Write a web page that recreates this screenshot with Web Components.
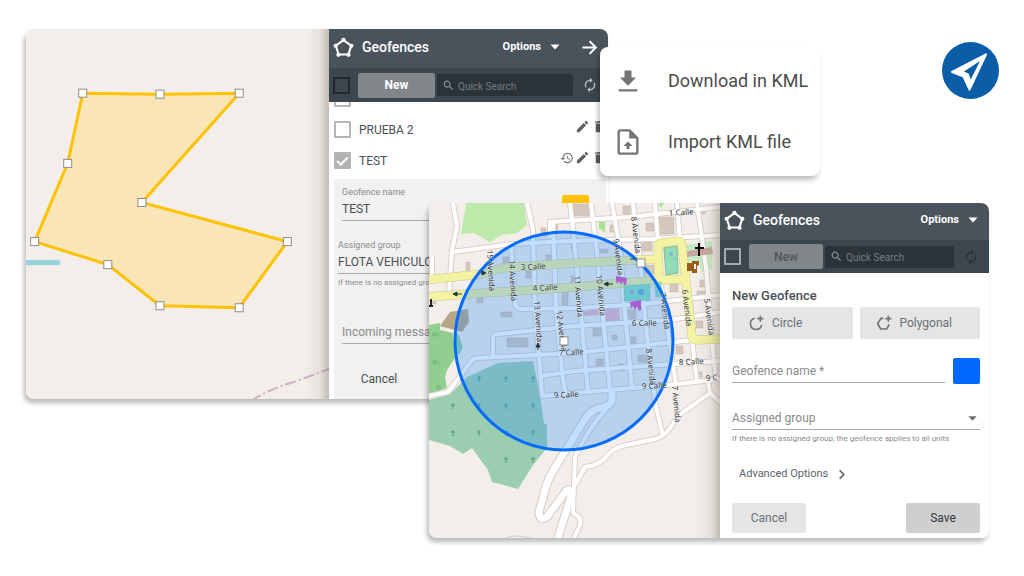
<!DOCTYPE html>
<html lang="en">
<head>
<meta charset="utf-8">
<meta name="viewport" content="width=device-width, initial-scale=1">
<title>Geofences</title>
<style>
  body{ margin:0; background:#fff; color:#4a4f54; font-family:Roboto,"Open Sans",sans-serif; font-size:12px; }
</style>
</head>
<body>
<geo-stage></geo-stage>

<script>
const html = String.raw;

// Base: clona la plantilla estática de cada clase en su shadow root
class BaseElement extends HTMLElement {
  constructor(){
    super();
    this.attachShadow({ mode: 'open' });
    const tpl = document.createElement('template');
    tpl.innerHTML = this.template();
    this.shadowRoot.appendChild(tpl.content.cloneNode(true));
  }
  template(){ return ''; }
}

/**
 * <geo-icon name size>
 * Los trazos usan currentColor
 */
const ICONS = {
  pentagon: '<path d="M12 3.5 20.8 10 17.6 20H6.4L3.2 10z" fill="none" stroke="currentColor" stroke-width="2.4"/><g fill="currentColor"><circle cx="12" cy="3.2" r="2.4"/><circle cx="21" cy="10" r="2.4"/><circle cx="17.8" cy="20.4" r="2.4"/><circle cx="6.2" cy="20.4" r="2.4"/><circle cx="3" cy="10" r="2.4"/></g>',
  caret: '<path d="M3 7h18l-9 10z" fill="currentColor"/>',
  arrow: '<path d="M2 12h18M12 3l9 9-9 9" fill="none" stroke="currentColor" stroke-width="2.8"/>',
  search: '<path fill="currentColor" d="M15.5 14h-.8l-.3-.3A6.5 6.5 0 1 0 13.700 14.400l.3.3v.8l5 5 1.500-1.500zm-6 0a4.500 4.500 0 1 1 0-9 4.500 4.500 0 0 1 0 9z"/>',
  refresh: '<path fill="currentColor" d="M12 6v3l4-4-4-4v3a8 8 0 0 0-6.800 12.300l1.500-1.500A6 6 0 0 1 12 6zm6.800 1.700-1.500 1.500A6 6 0 0 1 12 18v-3l-4 4 4 4v-3a8 8 0 0 0 6.800-12.300z"/>',
  edit: '<path fill="currentColor" d="M3 17.200V21h3.800L17.800 9.900 14.100 6.200zM20.700 7c.4-.4.4-1 0-1.400l-2.300-2.300a1 1 0 0 0-1.400 0l-1.800 1.800 3.700 3.700z"/>',
  trash: '<path fill="currentColor" d="M6 19c0 1.100.9 2 2 2h8a2 2 0 0 0 2-2V7H6zM19 4h-3.500l-1-1h-5l-1 1H5v2h14z"/>',
  history: '<path fill="currentColor" d="M13 3a9 9 0 0 0-9 9H1l4 4 4-4H6a7 7 0 1 1 2 4.900l-1.400 1.500A9 9 0 1 0 13 3zm-1 5v5l4.300 2.500.7-1.200-3.500-2.100V8z"/>',
  download: '<path fill="currentColor" d="M19 9h-4V3H9v6H5l7 7zM4 19v2h16v-2z"/>',
  upload: '<path d="M13.500 2H5.500A1.500 1.500 0 0 0 4 3.500v17A1.500 1.500 0 0 0 5.500 22h13a1.500 1.500 0 0 0 1.500-1.500V8.500z" fill="none" stroke="currentColor" stroke-width="2"/><path fill="currentColor" d="M13 2V9h7zM12 11.500l4 4h-2.700V18h-2.600v-2.500H8z"/>',
  circle: '<path d="M10 5a8.500 8.500 0 1 0 10.500 10M18.500 1v9M14 5.500h9" fill="none" stroke="currentColor" stroke-width="2.400"/>',
  polygon: '<path d="M11 5H7.500L2.500 13l4.500 8h9l4-7M18.500 1v9M14 5.500h9" fill="none" stroke="currentColor" stroke-width="2.400"/>',
  chevron: '<path d="M8 3l9 9-9 9" fill="none" stroke="currentColor" stroke-width="3.500"/>'
};

class GeoIcon extends BaseElement {
  template(){
    const size = this.getAttribute('size') || 16;
    return html`
      <style>
        :host{ display:inline-flex; flex:none; }
        svg{ display:block; }
      </style>
      <svg width="${size}" height="${size}" viewBox="0 0 24 24" aria-hidden="true">${ICONS[this.getAttribute('name')] || ''}</svg>`;
  }
}

/**
 * <geo-check label checked>
 * Casilla cuadrada; --line cambia el borde
 */
class GeoCheck extends BaseElement {
  template(){
    return html`
      <style>
        :host{ display:flex; }
        label{ display:flex; align-items:center; gap:8px; }
        input{ appearance:none; box-sizing:border-box; width:17px; height:17px; margin:0; border:2px solid var(--line,#b5b5b5); border-radius:1px; background:transparent; display:grid; place-items:center; }
        input:checked{ background:#b2b2b2; }
        input:checked::after{ content:""; width:9px; height:4px; border:solid #fff; border-width:0 0 2px 2px; transform:translateY(-1px) rotate(-45deg); }
      </style>
      <label><input type="checkbox" ${this.hasAttribute('checked') ? 'checked' : ''} ${this.textContent ? '' : 'aria-label="Select all"'}><slot></slot></label>`;
  }
}

/**
 * <geo-header arrow>
 * Barra superior: título y menú de opciones
 */
class GeoHeader extends BaseElement {
  template(){
    return html`
      <style>
        :host{ display:flex; align-items:center; box-sizing:border-box; height:var(--head-h); padding:0 10px 3px 4px; background:#4a535b; color:#fff; }
        h2{ margin:0 auto 0 8px; font-size:14px; line-height:16px; font-weight:500; }
        button{ display:flex; align-items:center; gap:8px; padding:0; border:0; background:none; color:inherit; font:700 11px/16px Roboto,sans-serif; }
        .go{ margin-left:20px; }
      </style>
      <geo-icon name="pentagon" size="21"></geo-icon>
      <h2><slot></slot></h2>
      <button type="button">Options <geo-icon name="caret" size="12"></geo-icon></button>
      ${this.hasAttribute('arrow') ? '<button class="go" type="button" aria-label="Hide"><geo-icon name="arrow" size="17"></geo-icon></button>' : ''}`;
  }
}

/**
 * <geo-toolbar idle>
 * - idle: sin acciones disponibles mientras se crea una geocerca
 */
class GeoToolbar extends BaseElement {
  template(){
    return html`
      <style>
        :host{ --line:#20272d; display:flex; align-items:center; box-sizing:border-box; height:var(--bar-h); padding:0 10px 0 4px; background:#3c464e; color:#b9bec2; }
        :host([idle]){ --line:#a5aaae; color:#262e34; }
        button{ padding:0; border:0; background:none; color:inherit; }
        .new{ flex:none; width:var(--new-w); height:25px; margin:0 2px 0 8px; border-radius:2px; background:#80868a; color:#fff; font:700 12px/16px Roboto,sans-serif; }
        :host([idle]) .new{ color:#50575c; font-weight:500; }
        .search{ flex:1; min-width:0; display:flex; align-items:center; gap:3px; height:22px; padding-left:5px; border-radius:2px; background:#2b3339; color:#8d9397; }
        input{ flex:1; min-width:0; padding:3px 0 0; border:0; outline:0; background:none; color:#fff; font:10px/16px Roboto,sans-serif; }
        input::placeholder{ color:#747b80; opacity:1; }
        .reload{ display:flex; margin-left:9px; }
      </style>
      <geo-check></geo-check>
      <button class="new" type="button">New</button>
      <label class="search"><geo-icon name="search" size="13"></geo-icon><input type="search" placeholder="Quick Search" aria-label="Quick Search"></label>
      <button class="reload" type="button" aria-label="Refresh"><geo-icon name="refresh" size="16"></geo-icon></button>`;
  }
}

/**
 * <geo-field label value hint floating select>
 * - floating: la etiqueta queda arriba y el valor debajo
 */
class GeoField extends BaseElement {
  template(){
    const label = this.getAttribute('label');
    const value = this.getAttribute('value') || '';
    const hint = this.getAttribute('hint');
    const floating = this.hasAttribute('floating');
    const name = floating ? '' : `aria-label="${label}"`;
    const control = this.hasAttribute('select')
      ? `<select id="control" ${name}><option>${value || label}</option></select><geo-icon name="caret" size="11"></geo-icon>`
      : `<input id="control" type="text" value="${value}" placeholder="${floating ? '' : label}" ${name}>`;
    return html`
      <style>
        :host{ display:block; flex:1; min-width:0; color:#4a4f54; }
        label{ display:block; font-size:9px; line-height:12px; color:#8a8a8a; }
        .box{ display:flex; align-items:center; height:22px; border-bottom:1px solid #a8a8a8; padding-right:2px; }
        input, select{ appearance:none; flex:1; min-width:0; padding:0; border:0; outline:0; background:none; color:inherit; font:12px/16px Roboto,sans-serif; }
        input::placeholder{ color:#8a8a8a; opacity:1; }
        :host([select]:not([value])) select{ color:#8a8a8a; }
        geo-icon{ color:#6a6a6a; }
        small{ display:block; margin-top:4px; font-size:8px; line-height:10px; color:#8a8a8a; white-space:nowrap; }
      </style>
      ${floating ? `<label for="control">${label}</label>` : ''}
      <div class="box">${control}</div>
      ${hint ? `<small>${hint}</small>` : ''}`;
  }
}

/**
 * <geo-button icon kind>
 * kind: flat | soft (default) | strong
 */
class GeoButton extends BaseElement {
  template(){
    const icon = this.getAttribute('icon');
    return html`
      <style>
        :host{ display:flex; }
        button{ flex:1; display:flex; align-items:center; justify-content:center; gap:8px; height:30px; min-width:74px; padding:0 16px; border:0; border-radius:2px; background:#e5e5e5; color:#6a7076; font:12px/16px Roboto,sans-serif; }
        :host([icon]) button{ justify-content:flex-start; height:32px; }
        :host([kind="flat"]) button{ background:none; color:#4a4f54; }
        :host([kind="strong"]) button{ background:#cfcfcf; color:#33383c; }
      </style>
      <button type="button">${icon ? `<geo-icon name="${icon}" size="16"></geo-icon>` : ''}<slot></slot></button>`;
  }
}

class GeoSwatch extends BaseElement {
  template(){
    return html`
      <style>
        :host{ display:block; flex:none; }
        button{ display:block; width:27px; height:26px; padding:0; border:0; border-radius:2px; background:var(--swatch); }
      </style>
      <button type="button" aria-label="Color"></button>`;
  }
}

/**
 * <geo-row checked history>
 * Una geocerca de la lista con sus acciones
 */
class GeoRow extends BaseElement {
  template(){
    return html`
      <style>
        :host{ display:flex; align-items:center; flex:none; height:31px; padding:0 1px 0 5px; }
        geo-check{ margin-right:auto; }
        button{ display:flex; margin-bottom:6px; padding:0; border:0; background:none; color:#5d5d5d; }
        .edit{ margin-right:2px; }
        .past{ margin-right:1px; color:#777; }
      </style>
      <geo-check ${this.hasAttribute('checked') ? 'checked' : ''}>${this.getAttribute('label')}</geo-check>
      ${this.hasAttribute('history') ? '<button class="past" type="button" aria-label="History"><geo-icon name="history" size="14"></geo-icon></button>' : ''}
      <button class="edit" type="button" aria-label="Edit"><geo-icon name="edit" size="15"></geo-icon></button>
      <button class="bin" type="button" aria-label="Delete"><geo-icon name="trash" size="15"></geo-icon></button>`;
  }
}

// Panel con la lista y la geocerca abierta
class ListPanel extends BaseElement {
  template(){
    return html`
      <style>
        :host{ --head-h:39px; --bar-h:34px; --new-w:77px; display:block; width:279px; background:#fff; }
        .list{ display:flex; flex-direction:column; justify-content:flex-end; height:74px; overflow:hidden; }
        .detail{ margin:3px 2px 0 5px; padding:7px 0 5px 4px; background:#f1f1f1; }
        .inset{ display:flex; align-items:flex-end; gap:8px; padding:0 17px 0 4px; }
        .group{ margin:18px 13px 33px 0; }
        geo-button{ width:74px; margin:20px 0 0 4px; }
      </style>
      <geo-header arrow>Geofences</geo-header>
      <geo-toolbar></geo-toolbar>
      <div class="list">
        <geo-row label=" "></geo-row>
        <geo-row label="PRUEBA 2"></geo-row>
        <geo-row label="TEST" checked history></geo-row>
      </div>
      <div class="detail">
        <div class="inset"><geo-field floating label="Geofence name" value="TEST"></geo-field><geo-swatch style="--swatch:#fcc203"></geo-swatch></div>
        <geo-field class="group" floating select label="Assigned group" value="FLOTA VEHICULOS" hint="If there is no assigned group, the geofence applies to all units"></geo-field>
        <div class="inset"><geo-field label="Incoming message"></geo-field></div>
        <geo-button kind="flat">Cancel</geo-button>
      </div>`;
  }
}

// Panel con el formulario de alta
class FormPanel extends BaseElement {
  template(){
    return html`
      <style>
        :host{ --head-h:37px; --bar-h:33px; --new-w:74px; display:block; width:269px; background:#fff; }
        form{ padding:15px 9px 5px 12px; }
        h3{ margin:0 0 3px; font-size:13px; line-height:16px; font-weight:500; }
        .shapes{ display:grid; grid-template-columns:1fr 1fr; gap:7px; }
        .name{ display:flex; align-items:center; gap:8px; margin:19px 0 23px; }
        .more{ display:flex; align-items:center; gap:8px; margin:22px 0 21px 7px; padding:0; border:0; background:none; color:#5c646b; font:11px/16px Roboto,sans-serif; }
        .actions{ display:flex; justify-content:space-between; }
      </style>
      <geo-header>Geofences</geo-header>
      <geo-toolbar idle></geo-toolbar>
      <form>
        <h3>New Geofence</h3>
        <div class="shapes">
          <geo-button icon="circle">Circle</geo-button>
          <geo-button icon="polygon">Polygonal</geo-button>
        </div>
        <div class="name"><geo-field label="Geofence name *"></geo-field><geo-swatch style="--swatch:#0069ff"></geo-swatch></div>
        <geo-field select label="Assigned group" hint="If there is no assigned group, the geofence applies to all units"></geo-field>
        <button class="more" type="button">Advanced Options <geo-icon name="chevron" size="11"></geo-icon></button>
        <div class="actions">
          <geo-button>Cancel</geo-button>
          <geo-button kind="strong">Save</geo-button>
        </div>
      </form>`;
  }
}

const handle = (x, y) => `<rect x="${x - 4}" y="${y - 4}" width="8" height="8" fill="#fff" stroke="#8d8d8d"/>`;

const MAP_CSS = `
  :host{ display:block; flex:1; min-width:0; background:#f3eeea; }
  svg{ display:block; width:100%; height:0; min-height:100%; }`;

const EDGE = `<linearGradient id="edge"><stop offset="0" stop-color="#786e60" stop-opacity="0"/><stop offset=".6" stop-color="#786e60" stop-opacity=".1"/><stop offset="1" stop-color="#786e60" stop-opacity=".4"/></linearGradient>`;

class PolygonMap extends BaseElement {
  template(){
    const points = [[83,93],[160,94],[239,93],[142,202],[287,241],[239,307],[160,305],[108,264],[35,241],[68,163]];
    return html`
      <style>${MAP_CSS}</style>
      <svg viewBox="26 29 303 369" preserveAspectRatio="xMidYMid slice" role="img" aria-label="Map">
        <defs>${EDGE}</defs>
        <path d="M26 262H58" stroke="#97d3dc" stroke-width="5" stroke-linecap="round"/>
        <path d="M251 400Q265 390 290 382T330 367" fill="none" stroke="#cdb1c2" stroke-width="2" stroke-dasharray="11 3 2 3"/>
        <polygon points="${points.join(' ')}" fill="#ffdf8c" fill-opacity=".55" stroke="#fcc203" stroke-width="3"/>
        ${points.map(p => handle(...p)).join('')}
        <rect x="305" y="29" width="24" height="369" fill="url(#edge)"/>
      </svg>`;
  }
}

const STREETS = [
  'M453 203 457 227 452 250 449 294', 'M452 252 512 244 570 241 653 239 720 235', 'M432 257V276',
  'M550 238V222L630 217 720 207', 'M511 245 515 303Q516 309 522 309L575 308 645 304 720 295',
  'M527 203 533 230 535 310 541 380 542 396', 'M553 222 556 310 563 380 566 394', 'M570 203 575 248 582 325 588 392',
  'M591 203 597 252 603 318 610 390', 'M612 203 620 250 625 313 632 388', 'M633 203 640 260 645 317 653 385 656 407 663 436',
  'M655 203 658 243 660 280 668 333 676 384', 'M677 203 680 240 685 280 692 340 697 381', 'M697 203 706 267 712 340 716 380',
  'M493 356V338Q493 334 498 334L575 326 670 320 720 312', 'M429 396 448 392 472 360Q474 358 478 358L575 353 692 340',
  'M541 376 575 371 645 366 720 361', 'M542 396 608 390 670 385 720 379',
  'M607 408Q596 420 588 433T575 457L573 513Q582 517 580 525L573 540',
  'M575 485 585 467Q600 465 606 457T622 446L655 439Q664 437 670 428T682 413L710 393 708 382M710 393 722 404'
];
const SWITCHBACK = 'M612 390V401Q611 406 600 408T582 424L556 466Q548 478 545 490T539 512Q540 522 547 517L566 491Q572 487 571 496L557 541';
const AVENUES = [
  'M425 280 482 274 502 268 575 263 659 259', 'M425 297 575 287 661 280 685 279',
  'M659 281 658 246Q658 243 662 243L677 241Q681 241 682 245L692 336Q692 340 697 340L722 339'
];
const BUILDINGS = [
  [573,204,16,12],[623,206,7,9],[646,223,8,8],[659,217,15,17],[642,242,10,9],[610,225,6,7],[541,228,5,8],
  [466,262,4,9],[546,255,5,8],[526,271,5,7],[503,257,6,7],[477,297,6,6],[501,312,11,5],[507,338,21,9],
  [571,276,5,7],[562,292,6,14],[598,249,10,4],[571,243,6,6],[593,328,8,8],[627,310,9,9],[628,337,8,7],
  [638,355,9,7],[596,359,7,8],[618,364,6,7],[670,284,8,8],[696,321,7,7],[676,346,7,8],[697,291,8,5],
  [550,222,8,8],[697,208,8,6],[645,265,9,9],[700,280,8,7],[431,300,5,4],[695,372,7,5],[612,335,5,5]
];
const STREET_NAMES = [
  [521,270,'3 Calle',-3],[533,291,'4 Calle',-3],[669,216,'1 Calle',-4],[632,326,'6 Calle',-1],[679,365,'8 Calle',-3],
  [554,398,'9 Calle',-3],[642,389,'9 Calle',-3],[559,356,'7 Calle',-4],[706,381,'9 C',-4]
];
const AVENUE_NAMES = [
  [487,250,'15 Avenida',87],[509,260,'14 Avenida',87],[534,301,'13 Avenida',86],[556,311,'12 Avenida',82],
  [574,276,'11 Avenida',85],[596,275,'10 Avenida',84],[613,239,'9 Avenida',82],[631,217,'8 Avenida',83],
  [646,349,'8 Avenida',83],[660,293,'7 Avenida',83],[682,290,'6 Avenida',83],[704,299,'5 Avenida',82],[672,386,'7 Avenida',85]
];
const TREES = [[479,379],[506,379],[533,379],[453,406],[479,406],[506,406],[533,406],[453,433],[479,433],[506,433],[533,433],[506,460],[533,460]];

class CircleMap extends BaseElement {
  template(){
    const line = (d, color, width) => `<path d="${d}" stroke="${color}" stroke-width="${width}"/>`;
    const name = ([x, y, text, angle]) => `<text transform="translate(${x} ${y}) rotate(${angle})">${text}</text>`;
    return html`
      <style>
        ${MAP_CSS}
        .roads{ fill:none; stroke-linejoin:round; }
        text{ font-family:"Noto Sans","DejaVu Sans",sans-serif; font-size:8px; fill:#2f3338; stroke:#fff; stroke-opacity:.4; stroke-width:1px; paint-order:stroke; }
      </style>
      <svg viewBox="429 203 291 335" preserveAspectRatio="xMidYMid slice" role="img" aria-label="Map">
        <defs>${EDGE}</defs>
        <path fill="#bdeaaa" d="M466 203H524L527 225 517 233 502 235 490 242 474 233 461 234z"/>
        <path fill="#91cf90" d="M429 325 440 323 440 330 453 333 455 358 447 370 445 378 447 388 429 394z"/>
        <path fill="#9bcdb0" d="M429 400 450 394 467 377 498 363 533 361 540 395 544 424 547 424 547 448 533 465 518 489 492 482 488 470 472 448 463 454 450 446 429 440z"/>
        <path fill="#8ccfa0" d="M454 333 459 335 463 348 459 354 455 354z"/>
        <path fill="#b6a684" d="M440 326 450 312 468 309 469 322 462 332 455 330z"/>
        <path fill="#a7e394" d="M597 229 605 226V233L600 228zM599 222H605V229H599zM658 203H664L661 208z"/>
        <path fill="#c5ecc9" d="M684 245 712 241V270L702 272 699 262 685 262z"/>
        <g fill="#d5c7be" stroke="#c3b3a9" stroke-width=".5">${BUILDINGS.map(([x, y, w, h]) => `<rect x="${x}" y="${y}" width="${w}" height="${h}"/>`).join('')}</g>
        <path fill="#f0b5c5" d="M584 311 598 309 599 315 584 316zM605 309 619 307 620 321 606 322z"/>
        <g class="roads">
          ${line(SWITCHBACK, '#d5ccc6', 9)}
          ${STREETS.map(d => line(d, '#d9d0ca', 6)).join('')}
          ${STREETS.map(d => line(d, '#fff', 4)).join('')}
          ${line(SWITCHBACK, '#fff', 7)}
          ${AVENUES.map(d => line(d, '#c8cb8f', 9)).join('')}
          ${AVENUES.map(d => line(d, '#f3f3a3', 8)).join('')}
          <path d="M505 538Q517 534 530 538" stroke="#d5ccc6"/>
        </g>
        <path fill="#92ddb6" stroke="#7fbd90" d="M664 248 677 246 678 273 666 275z"/>
        <path fill="#86dfc0" stroke="#73bfae" stroke-width=".5" d="M624 286 650 284 650 300 624 301zM655 283 661 282 662 296 656 297z"/>
        <path fill="#c8a9a0" d="M687 251 712 247 713 254 687 257z"/>
        <path d="M699 243V256M695 248H704" stroke="#000" stroke-width="2"/>
        <path fill="#9b5a16" d="M687 263H692V271H687zM692 261H699V265L697 266V273H692z"/>
        <path d="M694 264H696V269H694z" fill="#fff"/>
        <circle cx="671" cy="254" r="2" fill="#79b7d8"/><circle cx="675" cy="259" r="1" fill="#79b7d8"/>
        <circle cx="641" cy="292" r="3" fill="#69a7da"/><circle cx="632" cy="292" r="2" fill="#a99fc4"/>
        <g stroke="#4f9c7a" fill="none">${TREES.map(([x, y]) => `<path d="M${x} ${y - 3}V${y + 3}M${x - 2} ${y - 1}H${x + 2}"/>`).join('')}</g>
        <g stroke="#6fae74" fill="none"><path d="M433 333h3v3h-3zM437 333l3 3M433 361h3v3h-3zM437 361l3 3M437 386h3v3h-3z"/></g>
        <path d="M429 306H433M431 299V306" stroke="#222" stroke-width="2"/>

        <circle cx="564" cy="341" r="109" fill="#3292fa" fill-opacity=".3" stroke="#076cf8" stroke-width="3"/>
        <g fill="#a95fd0"><path d="M616 276 627 278 626 285 624 285 623 281 621 285 619 281 617 284 616 280zM630 302 641 300 641 310 639 311 637 306 635 310 633 306 631 309z"/></g>
        <g stroke="#26343c" stroke-width="1" fill="#26343c"><path d="M455 294h7M453 294l4-2v4zM481 273h4M482 271l4 2-4 2zM605 284h8M604 284l4-2v4zM630 259h5M538 343v7M538 343l-2 4h4z"/></g>
        <g>${STREET_NAMES.map(name).join('')}</g>
        <g>${AVENUE_NAMES.map(name).join('')}</g>
        ${handle(564, 341)}${handle(641, 263)}
        <rect x="696" y="203" width="24" height="335" fill="url(#edge)"/>
      </svg>`;
  }
}

/**
 * <geo-window>
 * slots: map, panel
 */
class GeoWindow extends BaseElement {
  template(){
    return html`
      <style>
        :host{ display:block; border-radius:8px; box-shadow:-2px 4px 5px rgba(0,0,0,.28); }
        .frame{ display:flex; overflow:hidden; border-radius:8px; }
        slot{ display:contents; }
      </style>
      <div class="frame"><slot name="map"></slot><slot name="panel"></slot></div>`;
  }
}

class KmlMenu extends BaseElement {
  template(){
    return html`
      <style>
        :host{ display:flex; flex-direction:column; gap:21px; padding:14px 0 14px 14px; border-radius:8px; background:#fff; box-shadow:-2px 4px 5px rgba(0,0,0,.25); }
        button{ display:flex; align-items:center; gap:26px; height:40px; padding:0; border:0; background:none; color:#4c4c4c; font:18px/24px Roboto,sans-serif; white-space:nowrap; }
        geo-icon{ color:#757575; }
      </style>
      <button type="button"><geo-icon name="download" size="28"></geo-icon>Download in KML</button>
      <button type="button"><geo-icon name="upload" size="28"></geo-icon>Import KML file</button>`;
  }
}

class AppBadge extends BaseElement {
  template(){
    return html`
      <style>
        :host{ display:block; }
        svg{ display:block; width:100%; }
      </style>
      <svg viewBox="12 12 57 57" role="img" aria-label="Navigation">
        <circle cx="40.500" cy="40.500" r="28.500" fill="#0b5da8"/>
        <path d="M56 24.500 22 42 33.500 46.500 39.500 59.500z" fill="#fff" stroke="#fff" stroke-width="2" stroke-linejoin="round"/>
        <path d="M50 31 34 41.500 38 43.500 40.500 50z" fill="#0b5da8"/>
        <path d="M33 42 38.500 43.500 41 50 35.500 47z" fill="#fff"/>
      </svg>`;
  }
}

// Escenario: las ventanas se solapan compartiendo la misma fila de la rejilla
class GeoStage extends BaseElement {
  template(){
    return html`
      <style>
        :host{ display:grid; grid-template-columns:26fr 403fr 171fr 8fr 212fr 122fr 47fr 10fr 25fr; align-items:start; min-width:900px; padding-bottom:38px; }
        geo-window, kml-menu, app-badge{ grid-row:1; min-width:0; }
        .polygon{ grid-column:2 / 5; margin-top:29px; }
        .menu{ grid-column:4 / 6; margin-top:47px; }
        .circle{ grid-column:3 / 8; margin-top:203px; }
        .badge{ grid-column:7 / 9; margin-top:42px; }
      </style>
      <geo-window class="polygon"><polygon-map slot="map"></polygon-map><list-panel slot="panel"></list-panel></geo-window>
      <kml-menu class="menu"></kml-menu>
      <geo-window class="circle"><circle-map slot="map"></circle-map><form-panel slot="panel"></form-panel></geo-window>
      <app-badge class="badge"></app-badge>`;
  }
}

customElements.define('geo-icon', GeoIcon);
customElements.define('geo-check', GeoCheck);
customElements.define('geo-header', GeoHeader);
customElements.define('geo-toolbar', GeoToolbar);
customElements.define('geo-field', GeoField);
customElements.define('geo-button', GeoButton);
customElements.define('geo-swatch', GeoSwatch);
customElements.define('geo-row', GeoRow);
customElements.define('list-panel', ListPanel);
customElements.define('form-panel', FormPanel);
customElements.define('polygon-map', PolygonMap);
customElements.define('circle-map', CircleMap);
customElements.define('geo-window', GeoWindow);
customElements.define('kml-menu', KmlMenu);
customElements.define('app-badge', AppBadge);
customElements.define('geo-stage', GeoStage);
</script>
</body>
</html>
